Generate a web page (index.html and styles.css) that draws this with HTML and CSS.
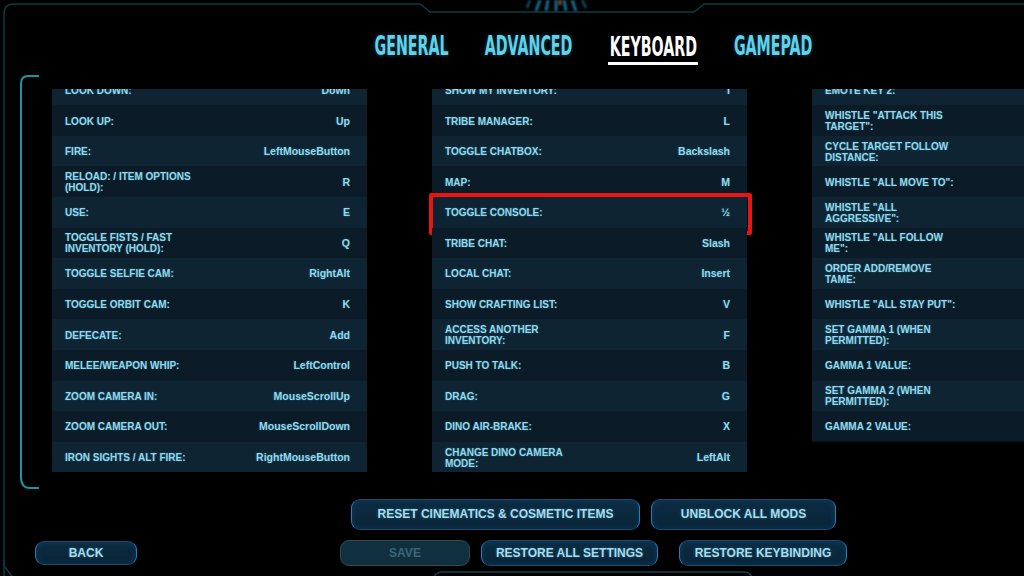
FILE: index.html
```html
<!DOCTYPE html>
<html lang="en">
<head>
<meta charset="utf-8">
<title>Options - Keyboard</title>
<link rel="stylesheet" href="styles.css">
</head>
<body>
<div class="screen">
  <svg class="frame" width="1024" height="576" viewBox="0 0 1024 576" aria-hidden="true">
    <defs>
      <filter id="blur" x="-20%" y="-50%" width="140%" height="200%"><feGaussianBlur stdDeviation="1.2"/></filter>
    </defs>
    <path d="M4 576 L4 14 Q4 4 14 4 L420 4 L430 12 L694 12 L704 4 L1024 4" fill="none" stroke="#0d3a44" stroke-width="1.5"/>
    <path d="M4 560 L4 566 L12 576" fill="none" stroke="#0d3a44" stroke-width="1.5"/>
    <path d="M434 577 L434 580 Q434 572 442 572 L744 572 Q752 572 752 580" fill="none" stroke="#0f4450" stroke-width="1.5"/>
    <g filter="url(#blur)">
      <path d="M540 0 L536 11 M548 0 L546 11 M556 0 L556 11 M564 0 L566 11 M572 0 L576 11" stroke="#1f7ea6" stroke-width="2.5"/>
      <path d="M530 0 L527 8 M582 0 L586 8" stroke="#185c78" stroke-width="2"/>
      <path d="M560 0 L560 5" stroke="#a86a2a" stroke-width="2"/>
    </g>
    <path d="M39 76 L28 76 Q21 76 21 84 L21 477 Q21 488 30 488 L39 488" fill="none" stroke="#1a95a6" stroke-width="2"/>
  </svg>

  <nav class="tabs">
    <div class="tab tab-general"><span class="tab-text">GENERAL</span></div>
    <div class="tab tab-advanced"><span class="tab-text">ADVANCED</span></div>
    <div class="tab tab-keyboard active"><span class="tab-text">KEYBOARD</span></div>
    <div class="tab tab-gamepad"><span class="tab-text">GAMEPAD</span></div>
  </nav>

  <main class="columns">
    <section class="col">
      <div class="list">
        <div class="row"><span class="label">LOOK DOWN:</span><span class="val">Down</span></div>
        <div class="row"><span class="label">LOOK UP:</span><span class="val">Up</span></div>
        <div class="row"><span class="label">FIRE:</span><span class="val">LeftMouseButton</span></div>
        <div class="row"><span class="label">RELOAD: / ITEM OPTIONS<br>(HOLD):</span><span class="val">R</span></div>
        <div class="row"><span class="label">USE:</span><span class="val">E</span></div>
        <div class="row"><span class="label">TOGGLE FISTS / FAST<br>INVENTORY (HOLD):</span><span class="val">Q</span></div>
        <div class="row"><span class="label">TOGGLE SELFIE CAM:</span><span class="val">RightAlt</span></div>
        <div class="row"><span class="label">TOGGLE ORBIT CAM:</span><span class="val">K</span></div>
        <div class="row"><span class="label">DEFECATE:</span><span class="val">Add</span></div>
        <div class="row"><span class="label">MELEE/WEAPON WHIP:</span><span class="val">LeftControl</span></div>
        <div class="row"><span class="label">ZOOM CAMERA IN:</span><span class="val">MouseScrollUp</span></div>
        <div class="row"><span class="label">ZOOM CAMERA OUT:</span><span class="val">MouseScrollDown</span></div>
        <div class="row"><span class="label">IRON SIGHTS / ALT FIRE:</span><span class="val">RightMouseButton</span></div>
      </div>
    </section>

    <section class="col">
      <div class="list">
        <div class="row"><span class="label">SHOW MY INVENTORY:</span><span class="val">I</span></div>
        <div class="row"><span class="label">TRIBE MANAGER:</span><span class="val">L</span></div>
        <div class="row"><span class="label">TOGGLE CHATBOX:</span><span class="val">Backslash</span></div>
        <div class="row"><span class="label">MAP:</span><span class="val">M</span></div>
        <div class="row highlighted"><span class="label">TOGGLE CONSOLE:</span><span class="val">½</span></div>
        <div class="row"><span class="label">TRIBE CHAT:</span><span class="val">Slash</span></div>
        <div class="row"><span class="label">LOCAL CHAT:</span><span class="val">Insert</span></div>
        <div class="row"><span class="label">SHOW CRAFTING LIST:</span><span class="val">V</span></div>
        <div class="row"><span class="label">ACCESS ANOTHER<br>INVENTORY:</span><span class="val">F</span></div>
        <div class="row"><span class="label">PUSH TO TALK:</span><span class="val">B</span></div>
        <div class="row"><span class="label">DRAG:</span><span class="val">G</span></div>
        <div class="row"><span class="label">DINO AIR-BRAKE:</span><span class="val">X</span></div>
        <div class="row"><span class="label">CHANGE DINO CAMERA<br>MODE:</span><span class="val">LeftAlt</span></div>
      </div>
    </section>

    <section class="col">
      <div class="list">
        <div class="row"><span class="label">EMOTE KEY 2:</span></div>
        <div class="row"><span class="label">WHISTLE "ATTACK THIS<br>TARGET":</span></div>
        <div class="row"><span class="label">CYCLE TARGET FOLLOW<br>DISTANCE:</span></div>
        <div class="row"><span class="label">WHISTLE "ALL MOVE TO":</span></div>
        <div class="row"><span class="label">WHISTLE "ALL<br>AGGRESSIVE":</span></div>
        <div class="row"><span class="label">WHISTLE "ALL FOLLOW<br>ME":</span></div>
        <div class="row"><span class="label">ORDER ADD/REMOVE<br>TAME:</span></div>
        <div class="row"><span class="label">WHISTLE "ALL STAY PUT":</span></div>
        <div class="row"><span class="label">SET GAMMA 1 (WHEN<br>PERMITTED):</span></div>
        <div class="row"><span class="label">GAMMA 1 VALUE:</span></div>
        <div class="row"><span class="label">SET GAMMA 2 (WHEN<br>PERMITTED):</span></div>
        <div class="row"><span class="label">GAMMA 2 VALUE:</span></div>
      </div>
    </section>
  </main>

  <footer class="footer">
    <div class="btn-row top-row">
      <button class="btn btn-reset">RESET CINEMATICS &amp; COSMETIC ITEMS</button>
      <button class="btn btn-unblock">UNBLOCK ALL MODS</button>
    </div>
    <div class="btn-row bottom-row">
      <button class="btn btn-back">BACK</button>
      <button class="btn btn-save" disabled>SAVE</button>
      <button class="btn btn-restore-all">RESTORE ALL SETTINGS</button>
      <button class="btn btn-restore-keys">RESTORE KEYBINDING</button>
    </div>
  </footer>
</div>
</body>
</html>
```

FILE: styles.css
```css
* { box-sizing: border-box; }

html, body {
  margin: 0;
  padding: 0;
  background: #000;
}

body {
  width: 1024px;
  height: 576px;
  overflow: hidden;
  font-family: "Liberation Sans", Arial, sans-serif;
}

.screen {
  position: relative;
  width: 1024px;
  height: 576px;
  overflow: hidden;
  background: #000;
}

.frame {
  position: absolute;
  left: 0;
  top: 0;
  pointer-events: none;
  z-index: 2;
}

/* Tabs */
.tabs {
  display: flex;
  gap: 38px;
  height: 89px;
  padding: 35px 0 0 376px;
}

.tab {
  display: flex;
  justify-content: center;
  height: 30px;
  line-height: 20px;
  padding-bottom: 7px;
  font-family: "DejaVu Sans Condensed", "Liberation Sans Narrow", sans-serif;
  font-weight: bold;
  font-size: 18.6px;
  color: #5fd2ec;
  text-shadow: 0 0 4px rgba(60, 190, 230, 0.35);
  white-space: nowrap;
}

.tab-text {
  display: inline-block;
  transform: translateY(2px) scale(0.85, 1.42);
}

.tab-general { width: 72px; }
.tab-advanced { width: 86px; }
.tab-keyboard { width: 90px; }
.tab-gamepad { width: 78px; }

.tab.active {
  color: #ffffff;
  text-shadow: none;
  border-bottom: 3px solid #ffffff;
  margin: 0 -2px;
}

/* Columns */
.columns {
  display: flex;
  gap: 65px;
  padding-left: 52px;
  align-items: flex-start;
}

.col {
  flex: 0 0 315px;
  width: 315px;
  clip-path: inset(0 -12px 0 -12px);
}

.list {
  margin-top: -14.4px;
}

.row {
  position: relative;
  display: flex;
  justify-content: space-between;
  align-items: center;
  height: 30.6px;
  padding: 0 17px 0 13px;
  background: #0b1b27;
  color: #92d8ea;
  font-weight: bold;
  text-shadow: 0 0 2px rgba(70, 190, 225, 0.4);
}

.row:nth-child(odd) {
  background: #0f2433;
}

.label {
  font-size: 10px;
  line-height: 11px;
  padding-top: 1px;
}

.val {
  font-size: 10.5px;
  line-height: 11px;
  padding-top: 1px;
}

.row.highlighted::after {
  content: "";
  position: absolute;
  left: -3px;
  right: -5px;
  top: -4px;
  bottom: -7px;
  border: 4px solid #ea1414;
  border-radius: 2px;
}

/* Footer buttons */
.footer {
  padding-top: 26.6px;
}

.btn-row {
  display: flex;
  align-items: center;
}

.top-row {
  padding-left: 351px;
  gap: 11px;
  height: 31px;
}

.bottom-row {
  margin-top: 10px;
  padding-left: 35px;
  height: 26px;
}

.btn {
  font-family: "Liberation Sans", Arial, sans-serif;
  font-weight: bold;
  font-size: 12px;
  color: #a6dcec;
  background: linear-gradient(#0c2c43, #092438);
  border: 1.5px solid #1a4c6e;
  border-left-color: #2680bb;
  border-right-color: #2680bb;
  border-radius: 9px;
  padding: 0;
  height: 100%;
  text-shadow: 0 0 3px rgba(90, 200, 235, 0.35);
  box-shadow: inset 0 0 6px rgba(20, 90, 140, 0.35);
}

.btn-reset { width: 289px; }
.btn-unblock { width: 185px; }

.btn-back { width: 102px; height: 24px; }
.btn-save {
  width: 130px;
  margin-left: 203px;
  color: #3d6677;
  text-shadow: none;
  background: #10303f;
  border-color: #334a52;
  box-shadow: none;
}
.btn-restore-all { width: 177px; margin-left: 11px; }
.btn-restore-keys { width: 168px; margin-left: 21px; }
```
